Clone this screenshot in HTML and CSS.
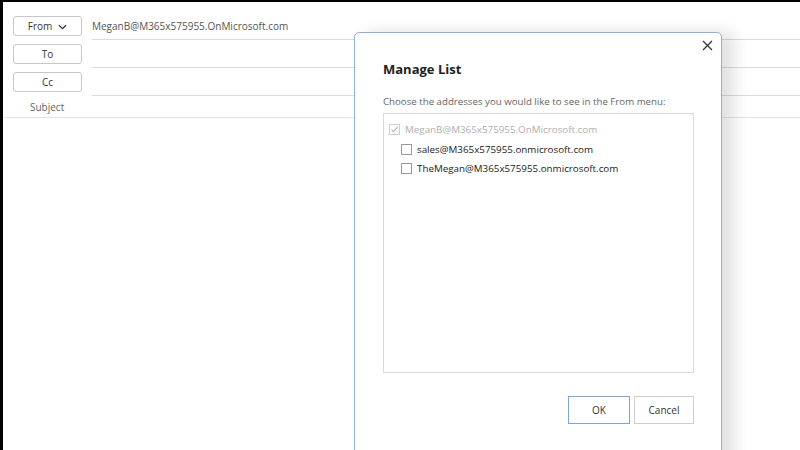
FILE: index.html
```
<!DOCTYPE html>
<html lang="en">
<head>
  <meta charset="UTF-8">
  <title>New Message</title>
  <link rel="stylesheet" href="styles.css">
</head>
<body>
  <div class="page">
    <!-- HEADER START -->
    <div class="compose">
      <div class="row">
        <button class="btn">From <svg class="chev" width="9" height="6" viewBox="0 0 9 6"><path d="M1 1.2 L4.5 4.6 L8 1.2" fill="none" stroke="#333" stroke-width="1.3"/></svg></button>
        <div class="field from">MeganB@M365x575955.OnMicrosoft.com</div>
      </div>
      <div class="row">
        <button class="btn">To</button>
        <div class="field"></div>
      </div>
      <div class="row">
        <button class="btn">Cc</button>
        <div class="field"></div>
      </div>
      <div class="subject">Subject</div>
    </div>
    <!-- HEADER END -->
  </div>

  <!-- DIALOG START -->
  <div class="dialog">
    <div class="dlg-close">
      <svg width="11" height="11" viewBox="0 0 11 11"><path d="M1 1 L10 10 M10 1 L1 10" stroke="#333" stroke-width="1.3"/></svg>
    </div>
    <h2>Manage List</h2>
    <p class="hint">Choose the addresses you would like to see in the From menu:</p>
    <div class="listbox">
      <div class="item disabled">
        <span class="cb checked"><svg width="9" height="9" viewBox="0 0 9 9"><path d="M1.5 4.6 L3.6 6.7 L7.7 1.8" fill="none" stroke="#b5b5b5" stroke-width="1.1"/></svg></span>
        MeganB@M365x575955.OnMicrosoft.com
      </div>
      <div class="item sub"><span class="cb"></span>sales@M365x575955.onmicrosoft.com</div>
      <div class="item sub"><span class="cb"></span>TheMegan@M365x575955.onmicrosoft.com</div>
    </div>
    <div class="dlg-footer">
      <button class="dbtn ok">OK</button>
      <button class="dbtn">Cancel</button>
    </div>
  </div>
  <!-- DIALOG END -->
</body>
</html>
```
FILE: styles.css
```
* {
  padding: 0;
  margin: 0;
  box-sizing: border-box;
  font-family: "Open Sans", "Noto Sans", sans-serif;
}
body {
  width: 800px;
  height: 450px;
  overflow: hidden;
  background: #fff;
  position: relative;
}
.page {
  height: 450px;
  border-top: 2px solid #000;
  border-left: 3px solid #000;
}
.compose {
  padding-top: 10px;
}
.row {
  display: flex;
  align-items: flex-start;
  height: 28px;
  padding-left: 10px;
}
.btn {
  width: 69px;
  height: 20px;
  margin-top: 4px;
  border: 1px solid #c8c8c8;
  border-radius: 3px;
  background: #fff;
  color: #333;
  font-size: 10px;
  display: flex;
  align-items: center;
  justify-content: center;
  gap: 6px;
}
.btn .chev { margin-top: 1px; }
.field {
  flex: 1;
  height: 28px;
  margin-left: 10px;
  border-bottom: 1px solid #dcdcdc;
  font-size: 10px;
  color: #555;
  line-height: 29px;
}
.subject {
  height: 22px;
  margin-left: 2px;
  padding-left: 25px;
  font-size: 10px;
  color: #666;
  line-height: 22px;
  border-bottom: 1px solid #e2e2e2;
}

.dialog {
  position: absolute;
  left: 354px;
  top: 32px;
  width: 368px;
  height: 440px;
  background: #fff;
  border: 1px solid #8fb2dc;
  border-radius: 5px;
  box-shadow: 12px 0 16px rgba(0,0,0,0.12);
  padding: 0 28px 0 28px;
}
.dlg-close {
  display: flex;
  justify-content: flex-end;
  height: 26px;
  padding-top: 7px;
  margin-right: -20px;
}
.dialog h2 {
  font-size: 13px;
  font-weight: 700;
  color: #222;
  line-height: 18px;
  margin-top: 1px;
}
.hint {
  font-size: 9.7px;
  color: #666;
  margin-top: 17px;
  line-height: 14px;
}
.listbox {
  margin-top: 4px;
  width: 311px;
  height: 260px;
  border: 1px solid #dadada;
  padding: 6px 0 0 5px;
}
.item {
  display: flex;
  align-items: center;
  height: 19.5px;
  font-size: 9.8px;
  color: #222;
}
.item.disabled { color: #b0b0b0; }
.item.sub { padding-left: 12px; }
.cb {
  width: 11px;
  height: 11px;
  border: 1px solid #9a9a9a;
  margin-right: 5px;
  display: flex;
  align-items: center;
  justify-content: center;
  background: #fff;
}
.cb.checked { border-color: #cfcfcf; }
.dlg-footer {
  display: flex;
  justify-content: flex-end;
  gap: 4px;
  width: 311px;
  margin-top: 23px;
}
.dbtn {
  width: 60px;
  height: 28px;
  background: #fff;
  border: 1px solid #cfcfcf;
  font-size: 10px;
  color: #333;
}
.dbtn.ok {
  width: 62px;
  border-color: #7da6d8;
}
```
